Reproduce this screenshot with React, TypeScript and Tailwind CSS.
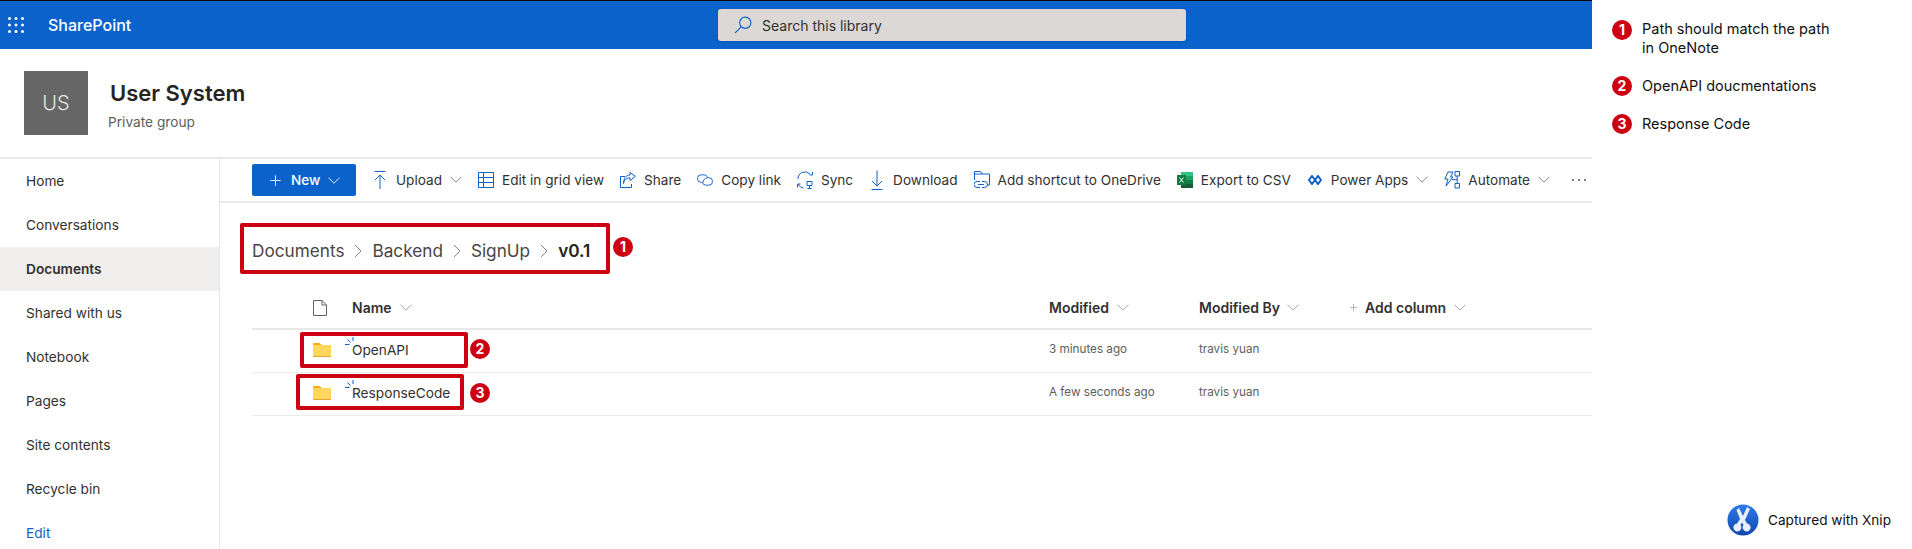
import type { ReactNode } from "react"
import { Plus } from "lucide-react"

const navItems = ["Home", "Conversations", "Documents", "Shared with us", "Notebook", "Pages", "Site contents", "Recycle bin"]

const Chevron = ({ className = "" }: { className?: string }) => (
  <svg viewBox="0 0 12 7" className={`h-[7px] w-[12px] shrink-0 ${className}`} fill="none" stroke="currentColor" strokeWidth="0.9">
    <path d="M0.5 0.7 6 6.2l5.5-5.5" />
  </svg>
)

const Badge = ({ n, className = "" }: { n: number; className?: string }) => (
  <span className={`flex h-[20px] w-[20px] shrink-0 items-center justify-center rounded-full bg-[#cc0012] text-[14px] leading-none font-bold text-white ${className}`}>
    {n}
  </span>
)

const UploadIcon = () => (
  <svg viewBox="0 0 16 20" className="h-[20px] w-[16px]" fill="none" stroke="#0b62cb" strokeWidth="1">
    <path d="M2.5 1.5h11M8 19V5M3 10l5-5 5 5" />
  </svg>
)
const GridIcon = () => (
  <svg viewBox="0 0 16 16" className="h-[16px] w-[16px]" fill="none" stroke="#0b62cb" strokeWidth="1">
    <path d="M.5.5h15v15H.5zM.5 5.5h15M.5 10.5h15M5.5.5v15" />
  </svg>
)
const ShareIcon = () => (
  <svg viewBox="0 0 16 16" className="h-[16px] w-[16px]" fill="none" stroke="#0b62cb" strokeWidth="1">
    <path d="M5 4.5H.5v11h11V12" />
    <path d="M3.5 11.5c.3-3.6 3-5.7 6.5-5.7V8.600l5.300-4.300L10 .5v2.500C6 3 3.500 6.500 3.500 11.500z" />
  </svg>
)
const LinkIcon = () => (
  <svg viewBox="0 0 17 14" className="h-[14px] w-[17px]" fill="none" stroke="#0b62cb" strokeWidth="1">
    <path d="M6 9.500H4.500a4 4 0 0 1 0-8h3a4 4 0 0 1 3.800 3" />
    <path d="M11 4.500h1.500a4 4 0 0 1 0 8h-3a4 4 0 0 1-3.800-3" />
    <path d="M6.700 9.500A4 4 0 0 1 10.500 5" />
  </svg>
)
const SyncIcon = () => (
  <svg viewBox="0 0 16 18" className="h-[18px] w-[16px]" fill="none" stroke="#0b62cb" strokeWidth="1">
    <path d="M1 8a7 7 0 0 1 12-5M15.500 1v3h-3M.5 13v3.500M.5 13h3M1 13a7 7 0 0 0 5.500 4" />
    <path d="M10 10.500h5v4h-5zM12.500 14.500v3M10.500 17.500h4" />
  </svg>
)
const DownloadIcon = () => (
  <svg viewBox="0 0 12 20" className="h-[20px] w-[12px]" fill="none" stroke="#0b62cb" strokeWidth="1">
    <path d="M6 .5v15M1 11l5 5 5-5M.5 19.500h11" />
  </svg>
)
const ShortcutIcon = () => (
  <svg viewBox="0 0 16 18" className="h-[18px] w-[16px]" fill="none" stroke="#0b62cb" strokeWidth="1">
    <path d="M.5 9V.5h6l2 2.500h7v11H13M.5 3h8" />
    <path d="M6 10.500H3a3 3 0 0 0 0 6h3M8 10.500h2.500a3 3 0 0 1 0 6H8M4 13.500h6" />
  </svg>
)
const ExcelIcon = () => (
  <svg viewBox="0 0 16 16" className="h-[16px] w-[16px]">
    <rect x="4" width="12" height="16" rx="0.500" fill="#21a366" />
    <rect x="4" width="12" height="4" fill="#33c481" />
    <rect x="4" y="8" width="12" height="4" fill="#107c41" />
    <rect x="4" y="12" width="12" height="4" fill="#185c37" />
    <rect y="3" width="9" height="10" fill="#107c41" />
    <path d="M2.500 5.500 6.500 10.500M6.500 5.500 2.500 10.500" stroke="#fff" strokeWidth="1" />
  </svg>
)
const PowerAppsIcon = () => (
  <svg viewBox="0 0 14 10" className="h-[10px] w-[14px]" fill="none" stroke="#0b62cb" strokeWidth="2">
    <path d="M4 1 7 5 4 9 1 5zM10 1l3 4-3 4-3-4z" />
  </svg>
)
const AutomateIcon = () => (
  <svg viewBox="0 0 16 18" className="h-[18px] w-[16px]" fill="none" stroke="#0b62cb" strokeWidth="1">
    <path d="M4 1h5L6.500 6H9l-7 9 2-7H.8z" />
    <path d="M11 .5h4.500V5H11zM11 12.500h4.500V17H11zM13.200 5v7.500M8 8.700h5.200" />
  </svg>
)

const Action = ({ icon, label, menu }: { icon: ReactNode; label: string; menu?: boolean }) => (
  <div className="flex shrink-0 items-center">
    <span className="flex w-[16px] items-center justify-center">{icon}</span>
    <span className="ml-[8px] whitespace-nowrap">{label}</span>
    {menu && <Chevron className="ml-[8px] text-[#777]" />}
  </div>
)

const FolderIcon = () => (
  <svg viewBox="0 0 18 14" className="h-[14px] w-[18px]">
    <path d="M0 1a1 1 0 0 1 1-1h5.500L9 2H0z" fill="#ffa90f" />
    <path d="M0 2h18v12H0z" fill="#ffd75e" />
    <path d="M0 13h18v1H0z" fill="#e8a33a" />
  </svg>
)

const NewIndicator = () => (
  <svg viewBox="0 0 9 8" className="absolute top-[-3px] left-[-7px] h-[8px] w-[9px]" fill="none" stroke="#0b62cb" strokeWidth="1">
    <path d="M8 0v4M2.500 2.500 5.500 5.500M0 7.500h4.500" />
  </svg>
)

const Row = ({ name, modified, box, badge }: { name: string; modified: string; box: string; badge: ReactNode }) => (
  <div className="relative flex h-[43px] items-center border-b border-[#edebe9] pb-[2px]">
    <div className="flex w-[797px] items-center pl-[61px]">
      <FolderIcon />
      <span className="relative ml-[21px] text-[13.7px] text-[#323130]">
        <NewIndicator />
        {name}
      </span>
    </div>
    <div className="w-[150px] text-[11.7px] text-[#605e5c]">{modified}</div>
    <div className="text-[11.7px] text-[#605e5c]">travis yuan</div>
    <div className={box} />
    {badge}
  </div>
)

const Xnip = () => (
  <svg viewBox="0 0 32 34" className="h-[34px] w-[32px]">
    <defs>
      <linearGradient id="xnip" x1="0" y1="0" x2="0" y2="1">
        <stop offset="0" stopColor="#2f7be8" />
        <stop offset="1" stopColor="#0f47b0" />
      </linearGradient>
    </defs>
    <circle cx="16" cy="17" r="15.500" fill="url(#xnip)" />
    <path d="M20 4l3 2-5 11 2 3.500a4 4 0 1 1-3.500 1.500L15 19.500 13.500 22a4 4 0 1 1-3.500-1.500L13 16 9.500 7l2.500-2 4 8z" fill="#e8eefb" />
  </svg>
)

const Crumb = () => (
  <svg viewBox="0 0 8 14" className="mx-[10px] h-[14px] w-[8px]" fill="none" stroke="#777" strokeWidth="0.900">
    <path d="M1 1l6 6-6 6" />
  </svg>
)

export default function App() {
  return (
    <div className="flex h-[549px] w-full overflow-hidden bg-white font-['Inter',sans-serif] text-[#323130]">
      <div className="flex w-[1592px] shrink-0 flex-col">
        <header className="flex h-[49px] shrink-0 items-center border-t border-black bg-[#0b62cb]">
          <svg viewBox="0 0 16 16" className="ml-[8px] h-[16px] w-[16px]" fill="#fff">
            {[1.5, 8, 14.5].flatMap((y) =>
              [1.5, 8, 14.5].map((x) => <circle key={`${x}-${y}`} cx={x} cy={y} r="1.500" />),
            )}
          </svg>
          <span className="ml-[24px] w-[670px] text-[16px] font-medium text-white">SharePoint</span>
          <div className="flex h-[32px] w-[468px] items-center rounded-[3px] bg-[#dbd8d5] pl-[16px] text-[14px] text-[#323130] shadow-sm">
            <svg viewBox="0 0 16 16" className="h-[18px] w-[18px]" fill="none" stroke="#0b62cb" strokeWidth="1">
              <circle cx="10" cy="6" r="5" />
              <path d="M6.500 9.500 1 15" />
            </svg>
            <span className="ml-[10px]">Search this library</span>
          </div>
        </header>

        <section className="flex h-[110px] shrink-0 border-b-2 border-[#e8e8e8] pt-[22px] pl-[24px]">
          <div className="flex h-[64px] w-[64px] items-center justify-center bg-[#666666] text-[20px] font-light text-[#e6e6e6]">US</div>
          <div className="ml-[20px]">
            <h1 className="mt-[7px] ml-[2px] text-[22px] leading-[30px] font-semibold text-[#252423]">User System</h1>
            <p className="mt-[4px] text-[13.7px] leading-[20px] text-[#605e5c]">Private group</p>
          </div>
        </section>

        <div className="flex min-h-0 flex-1">
          <nav className="w-[220px] shrink-0 border-r border-[#e8e8e8] text-[13.7px]">
            {navItems.map((item) => (
              <div
                key={item}
                className={
                  item === "Documents"
                    ? "flex h-[44px] items-center bg-[#f0efed] pl-[26px] font-semibold"
                    : "flex h-[44px] items-center pl-[26px]"
                }
              >
                {item}
              </div>
            ))}
            <div className="flex h-[44px] items-center pl-[26px] text-[#0b62cb]">Edit</div>
          </nav>

          <main className="min-w-0 flex-1">
            <div className="flex h-[44px] items-center gap-[16px] border-b-2 border-[#e8e8e8] pl-[32px] text-[13.6px] whitespace-nowrap">
              <button className="flex h-[32px] w-[104px] shrink-0 items-center rounded-[2px] bg-[#0b62cb] pl-[15px] font-medium text-white">
                <Plus size={17} strokeWidth={1.25} />
                <span className="ml-[7px]">New</span>
                <Chevron className="ml-[8px] text-white" />
              </button>
              <Action icon={<UploadIcon />} label="Upload" menu />
              <Action icon={<GridIcon />} label="Edit in grid view" />
              <Action icon={<ShareIcon />} label="Share" />
              <Action icon={<LinkIcon />} label="Copy link" />
              <Action icon={<SyncIcon />} label="Sync" />
              <Action icon={<DownloadIcon />} label="Download" />
              <Action icon={<ShortcutIcon />} label="Add shortcut to OneDrive" />
              <Action icon={<ExcelIcon />} label="Export to CSV" />
              <Action icon={<PowerAppsIcon />} label="Power Apps" menu />
              <Action icon={<AutomateIcon />} label="Automate" menu />
              <div className="ml-[6px] flex shrink-0 gap-[4px]">
                <span className="h-[2px] w-[2px] rounded-full bg-[#555]" />
                <span className="h-[2px] w-[2px] rounded-full bg-[#555]" />
                <span className="h-[2px] w-[2px] rounded-full bg-[#555]" />
              </div>
            </div>

            <div className="ml-[20px] flex h-[84px] items-start pt-[20px]">
              <div className="flex h-[51px] w-[370px] items-center rounded-[2px] border-4 border-[#cc0012] pt-[5px] pl-[8px] text-[17.2px] text-[#484644]">
                <span>Documents</span>
                <Crumb />
                <span>Backend</span>
                <Crumb />
                <span>SignUp</span>
                <Crumb />
                <span className="font-semibold text-[#252423]">v0.1</span>
              </div>
              <Badge n={1} className="mt-[14px] ml-[3px]" />
            </div>

            <div className="ml-[32px]">
              <div className="flex h-[43px] items-center border-b-2 border-[#e8e8e8] text-[14px] font-semibold text-[#323130]">
                <div className="flex w-[797px] items-center pl-[61px]">
                  <svg viewBox="0 0 14 16" className="h-[16px] w-[14px]" fill="none" stroke="#555" strokeWidth="0.900">
                    <path d="M.5.500h8.500l4.500 4.500v10.500H.5zM9 .5V5h4.500" />
                  </svg>
                  <span className="ml-[25px]">Name</span>
                  <Chevron className="ml-[8px] text-[#999]" />
                </div>
                <div className="flex w-[150px] items-center">
                  Modified
                  <Chevron className="ml-[8px] text-[#999]" />
                </div>
                <div className="flex w-[149px] items-center">
                  Modified By
                  <Chevron className="ml-[7px] text-[#999]" />
                </div>
                <div className="flex items-center">
                  <Plus size={11} strokeWidth={1} className="mr-[6px] text-[#666]" />
                  Add column
                  <Chevron className="ml-[8px] text-[#999]" />
                </div>
              </div>
              <Row
                name="OpenAPI"
                modified="3 minutes ago"
                box="absolute top-[2px] left-[48px] h-[36px] w-[168px] rounded-[2px] border-4 border-[#cc0012]"
                badge={<Badge n={2} className="absolute top-[9px] left-[218px]" />}
              />
              <Row
                name="ResponseCode"
                modified="A few seconds ago"
                box="absolute top-[1px] left-[44px] h-[36px] w-[168px] rounded-[2px] border-4 border-[#cc0012]"
                badge={<Badge n={3} className="absolute top-[10px] left-[218px]" />}
              />
            </div>
          </main>
        </div>
      </div>

      <aside className="flex min-w-0 flex-1 flex-col pt-[20px] pl-[20px] text-[14.5px] leading-[18.5px] text-[#111]">
        <div className="flex gap-[10px]">
          <Badge n={1} />
          <p className="mt-0">
            Path should match the path
            <br />
            in OneNote
          </p>
        </div>
        <div className="mt-[19px] flex items-center gap-[10px]">
          <Badge n={2} />
          <p>OpenAPI doucmentations</p>
        </div>
        <div className="mt-[18px] flex items-center gap-[10px]">
          <Badge n={3} />
          <p>Response Code</p>
        </div>
        <div className="mt-auto mb-[12px] ml-[115px] flex items-center">
          <Xnip />
          <span className="ml-[9px] text-[13.6px] whitespace-nowrap">Captured with Xnip</span>
        </div>
      </aside>
    </div>
  )
}
